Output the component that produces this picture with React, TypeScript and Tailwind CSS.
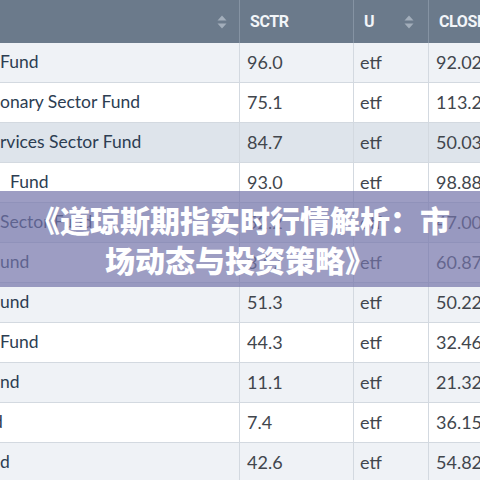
import React from "react";

// --- Data for the visible slice of the SCTR table ---
const rows = [
  { name: "Fund", indent: "pl-0", sctr: "96.0", close: "92.02" },
  { name: "onary Sector Fund", indent: "pl-0", sctr: "75.1", close: "113.24" },
  { name: "rvices Sector Fund", indent: "pl-0", sctr: "84.7", close: "50.03" },
  { name: "Fund", indent: "pl-[10px]", sctr: "93.0", close: "98.88" },
  { name: "Sector Fund", indent: "pl-0", sctr: "52.2", close: "47.00" },
  { name: "und", indent: "pl-0", sctr: "37.7", close: "60.87" },
  { name: "und", indent: "pl-0", sctr: "51.3", close: "50.22" },
  { name: "Fund", indent: "pl-0", sctr: "44.3", close: "32.46" },
  { name: "nd", indent: "pl-0", sctr: "11.1", close: "21.32" },
  { name: "d", indent: "-ml-[7px]", sctr: "7.4", close: "36.15" },
  { name: "d", indent: "pl-0", sctr: "42.6", close: "54.82" },
];

// Sort arrows in the header
const SortIcon = () => (
  <svg width="10" height="14" viewBox="0 0 10 14" className="shrink-0">
    <path d="M5 0.5 L9.5 5.5 H0.5 Z" fill="#a3aebb" />
    <path d="M5 13.5 L0.5 8.5 H9.5 Z" fill="#a3aebb" />
  </svg>
);

export default function App() {
  return (
    <div className="relative w-[480px] h-[480px] overflow-hidden bg-white">
      {/* Table */}
      <div className="w-[560px] font-['Lato',sans-serif] text-[18px]">
        {/* Header */}
        <div className="flex h-[43px] bg-[#6b7a8b] text-[#f2f5f8] font-['Roboto',sans-serif] font-bold text-[16px] tracking-tight">
          <div className="w-[240px] flex items-center justify-end pr-[12px] border-r border-[#8593a3]">
            <SortIcon />
          </div>
          <div className="w-[114px] flex items-center pl-[10px] border-r border-[#8593a3]">SCTR</div>
          <div className="w-[75px] flex items-center justify-between pl-[10px] pr-[14px] border-r border-[#8593a3]">
            <span>U</span>
            <SortIcon />
          </div>
          <div className="flex-1 flex items-center pl-[10px]">CLOSE</div>
        </div>

        {/* Body */}
        {rows.map((r, i) => (
          <div
            key={i}
            className={
              "flex h-[40px] border-b border-[#d3d9e0] " +
              (i === 2 ? "bg-[#dee4eb]" : i % 2 === 0 ? "bg-[#eff2f6]" : "bg-white")
            }
          >
            <div className="w-[240px] flex items-center overflow-hidden whitespace-nowrap border-r border-[#d3d9e0] text-[#2c3d52] text-[17.5px]">
              <span className={r.indent}>{r.name}</span>
            </div>
            <div className="w-[114px] flex items-center pl-[7px] border-r border-[#d3d9e0] text-[#41464d]">{r.sctr}</div>
            <div className="w-[75px] flex items-center pl-[6px] border-r border-[#d3d9e0] text-[#41464d]">etf</div>
            <div className="flex-1 flex items-center pl-[7px] text-[#41464d]">{r.close}</div>
          </div>
        ))}
      </div>

      {/* Title banner over the table */}
      <div className="absolute left-0 right-0 top-[191px] h-[96px] bg-[rgba(116,116,170,0.7)] flex flex-col items-center justify-center text-white font-['Noto_Sans_CJK_SC',sans-serif] font-black text-[30px] leading-[40px]">
        <p>《道琼斯期指实时行情解析：市</p>
        <p>场动态与投资策略》</p>
      </div>
    </div>
  );
}
